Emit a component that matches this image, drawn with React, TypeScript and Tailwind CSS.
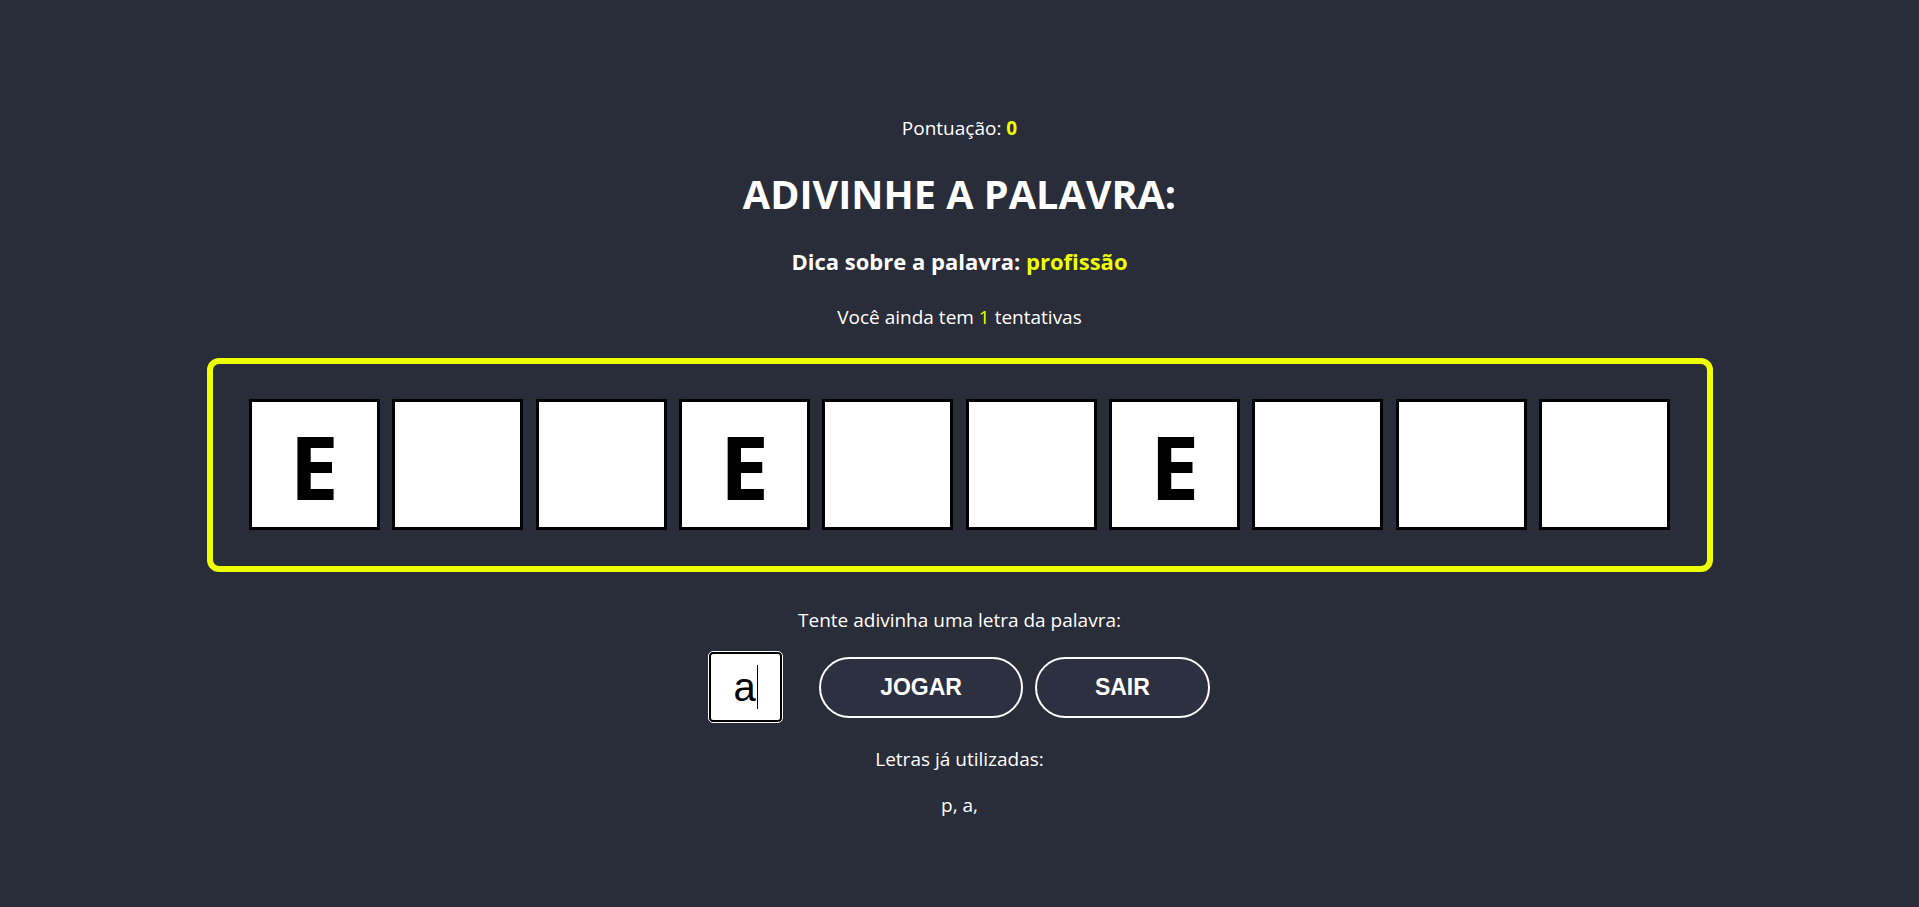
import { useState } from 'react';

const palavra = 'ENGENHEIRO';
const dica = 'profissão';

export default function App() {
  const [letra, setLetra] = useState('a');
  const usadas = ['p', 'a'];
  const pontos = 0;
  const tentativas = 1;

  return (
    <main className="min-h-screen bg-[#292c39] text-white font-['Open_Sans',sans-serif] flex flex-col items-center pt-[114px] pb-10">
      <p className="text-[19px] leading-[28px]">
        Pontuação: <span className="font-bold text-[#eeff00]">{pontos}</span>
      </p>

      <h1 className="mt-[28px] text-[39.6px] leading-[48px] font-bold">ADIVINHE A PALAVRA:</h1>

      <h3 className="mt-[28px] text-[22px] leading-[30px] font-bold">
        Dica sobre a palavra: <span className="text-[#eeff00]">{dica}</span>
      </h3>

      <p className="mt-[26.5px] text-[19px] leading-[28px]">
        Você ainda tem <span className="text-[#eeff00]">{tentativas}</span> tentativas
      </p>

      {/* palavra */}
      <div className="mt-[27.5px] w-[1506px] border-[6px] border-[#eeff00] rounded-[12px] pt-[35px] pb-[36px] flex justify-center gap-[12.4px]">
        {palavra.split('').map((l, i) => (
          <div
            key={i}
            className="w-[131px] h-[131px] bg-white border-[3px] border-black flex items-center justify-center text-black text-[88px] leading-none font-bold pt-[3px]"
          >
            {usadas.includes(l.toLowerCase()) || l === 'E' ? l : ''}
          </div>
        ))}
      </div>

      <p className="mt-[33.5px] text-[19px] leading-[28px]">Tente adivinha uma letra da palavra:</p>

      <div className="mt-[18.5px] flex items-center">
        <div className="w-[73px] h-[70px] bg-white border-2 border-black rounded-[4px] outline outline-1 outline-white flex items-center justify-center text-black text-[40px] font-['Liberation_Sans',Arial,sans-serif] mr-[37px]">
          <span className="leading-none">{letra}</span>
          <span className="w-px h-[44px] bg-black ml-[1px]" />
        </div>
        <button
          onClick={() => setLetra('')}
          className="h-[61px] px-[59px] rounded-full border-2 border-white bg-[#2d3040] text-white text-[23px] font-bold font-['Liberation_Sans',Arial,sans-serif] mr-[12px]"
        >
          JOGAR
        </button>
        <button className="h-[61px] px-[58px] rounded-full border-2 border-white bg-[#2d3040] text-white text-[23px] font-bold font-['Liberation_Sans',Arial,sans-serif]">
          SAIR
        </button>
      </div>

      <p className="mt-[22.5px] text-[19px] leading-[28px]">Letras já utilizadas:</p>
      <p className="mt-[18.6px] text-[19px] leading-[28px]">
        {usadas.map((u) => `${u}, `).join('')}
      </p>
    </main>
  );
}
